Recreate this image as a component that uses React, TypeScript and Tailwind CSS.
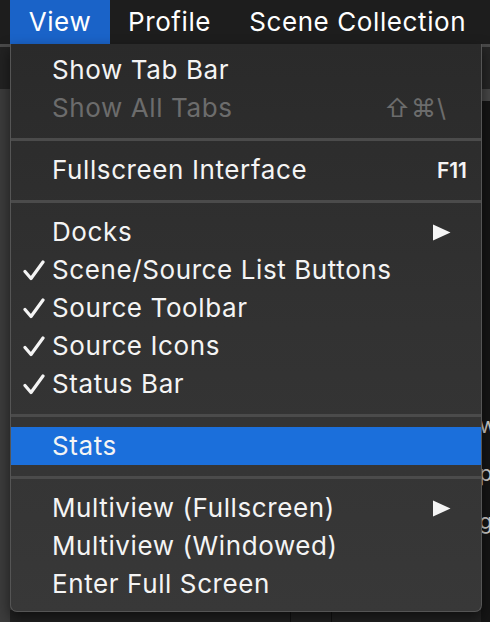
import type { ReactNode } from "react";

type Item =
  | { kind: "sep" }
  | {
      kind: "item";
      label: string;
      checked?: boolean;
      disabled?: boolean;
      active?: boolean;
      shortcut?: ReactNode;
      submenu?: boolean;
    };

const items: Item[] = [
  { kind: "item", label: "Show Tab Bar" },
  { kind: "item", label: "Show All Tabs", disabled: true, shortcut: "⇧⌘\\" },
  { kind: "sep" },
  { kind: "item", label: "Fullscreen Interface", shortcut: "F11" },
  { kind: "sep" },
  { kind: "item", label: "Docks", submenu: true },
  { kind: "item", label: "Scene/Source List Buttons", checked: true },
  { kind: "item", label: "Source Toolbar", checked: true },
  { kind: "item", label: "Source Icons", checked: true },
  { kind: "item", label: "Status Bar", checked: true },
  { kind: "sep" },
  { kind: "item", label: "Stats", active: true },
  { kind: "sep" },
  { kind: "item", label: "Multiview (Fullscreen)", submenu: true },
  { kind: "item", label: "Multiview (Windowed)" },
  { kind: "item", label: "Enter Full Screen" },
];

function Check() {
  return (
    <svg width="22" height="21" viewBox="0 0 22 21" aria-hidden>
      <path
        d="M2 11.5 8 18.5 20 2"
        fill="none"
        stroke="currentColor"
        strokeWidth="3.2"
        strokeLinecap="round"
        strokeLinejoin="round"
      />
    </svg>
  );
}

function Arrow() {
  return (
    <svg width="19" height="17" viewBox="0 0 19 17" aria-hidden>
      <path d="M1 0.5 18.5 8.5 1 16.5Z" fill="currentColor" />
    </svg>
  );
}

function Row({ item }: { item: Extract<Item, { kind: "item" }> }) {
  const color = item.disabled ? "text-[#6c6c6c]" : "text-[#f4f4f4]";
  return (
    <div
      className={[
        "relative flex h-[38px] items-center pl-[41px] pr-[30px]",
        item.active ? "bg-[#1b6fdb]" : "",
        color,
      ].join(" ")}
    >
      <span className="absolute left-[12px] top-[9px] flex w-[22px] justify-center">
        {item.checked ? <Check /> : null}
      </span>
      <span className="flex-1 text-[26px] leading-none tracking-[0.6px]">{item.label}</span>
      {item.shortcut === "F11" ? (
        <span className="mr-[-16px] text-[21px] font-semibold leading-none">F11</span>
      ) : item.shortcut ? (
        <span className="mr-[4px] text-[25px] leading-none tracking-[1px]">{item.shortcut}</span>
      ) : null}
      {item.submenu ? (
        <span className="flex">
          <Arrow />
        </span>
      ) : null}
    </div>
  );
}

export default function App() {
  return (
    <div
      className="relative h-[622px] w-[490px] overflow-hidden bg-[#3b3b3b] text-white"
      style={{ fontFamily: "Inter, 'Liberation Sans', sans-serif" }}
    >
      {/* menu bar */}
      <div className="flex h-[44px] items-center bg-[#1d1d1d] text-[26px] leading-none tracking-[0.6px]">
        <div className="ml-[10px] flex h-full w-[100px] items-center justify-center bg-[#1a63c8]">
          View
        </div>
        <div className="ml-[18px]">Profile</div>
        <div className="ml-[38px]">Scene Collection</div>
      </div>

      {/* app behind the menu */}
      <div className="flex h-[578px]">
        <div className="flex w-[10px] flex-col">
          <div className="h-[3px] bg-[#4a4a4a]" />
          <div className="h-[42px] bg-[#222222]" />
          <div className="flex-1 bg-[#3c3c3c]" />
        </div>
        <div className="flex-1" />
        <div className="flex w-[9px] flex-col">
          <div className="h-[3px] bg-[#4a4a4a]" />
          <div className="h-[42px] bg-[#262626]" />
          <div className="h-[12px] bg-[#484848]" />
          <div className="flex-1 bg-[#151515] pt-[300px] text-[22px] leading-[48px] text-[#cfcfcf]">
            <div className="-ml-[2px]">w</div>
            <div className="-ml-[2px]">p</div>
            <div className="-ml-[2px]">g</div>
          </div>
        </div>
      </div>
      <div className="absolute bottom-0 left-[10px] right-[9px] flex h-[12px] bg-[#222222]">
        <div className="ml-[280px] w-px bg-[#111]" />
        <div className="ml-[40px] w-px bg-[#111]" />
      </div>

      {/* dropdown */}
      <div className="absolute left-[10px] top-[44px] w-[472px] rounded-b-[7px] border-x border-b border-[#555555] bg-gradient-to-b from-[#2a2a2a] via-[#323232] to-[#383838] pb-[8px] pt-[7px] shadow-[0_6px_14px_rgba(0,0,0,0.55)]">
        {items.map((item, i) =>
          item.kind === "sep" ? (
            <div key={i} className="flex h-[24px] items-center">
              <div className="h-[3px] w-full bg-[#4b4b4b]" />
            </div>
          ) : (
            <Row key={i} item={item} />
          ),
        )}
      </div>
    </div>
  );
}
